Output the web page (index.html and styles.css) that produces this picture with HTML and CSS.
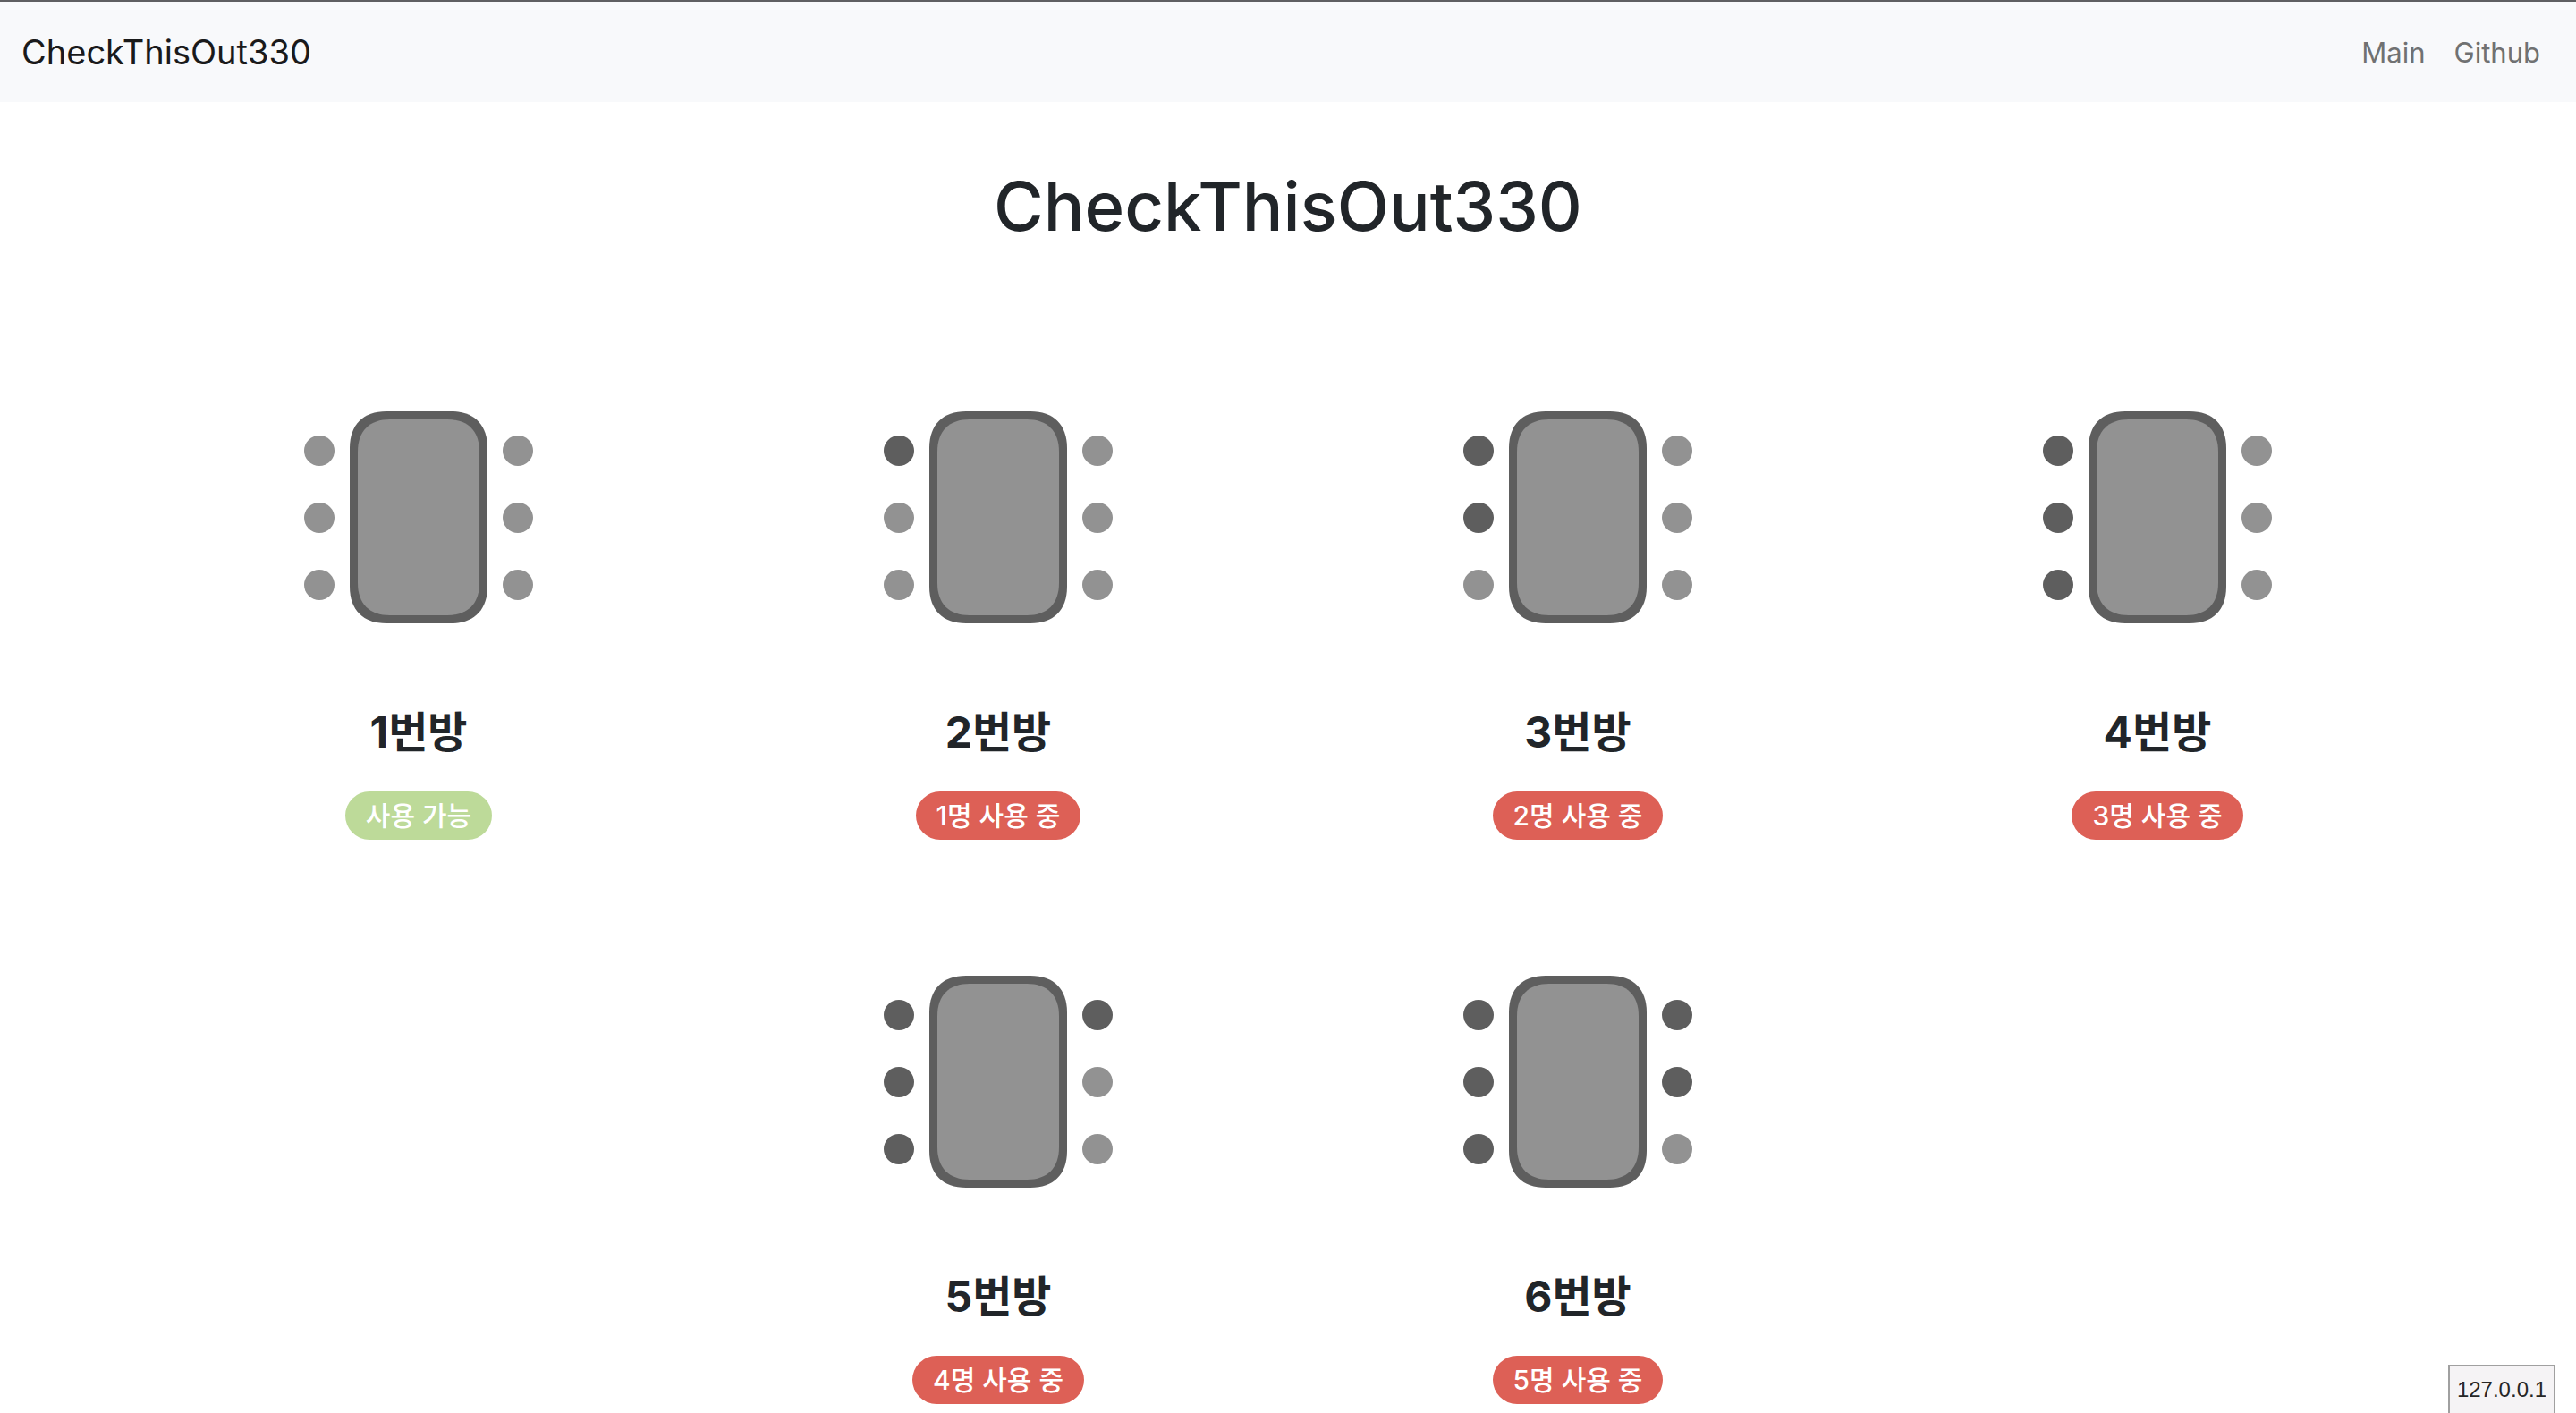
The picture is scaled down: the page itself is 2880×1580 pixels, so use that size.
FILE: index.html
```html
<!DOCTYPE html>
<html lang="ko">
<head>
<meta charset="utf-8">
<meta name="viewport" content="width=device-width, initial-scale=1">
<title>CheckThisOut330</title>
<link rel="stylesheet" href="styles.css">
</head>
<body>
<svg class="sprite" aria-hidden="true">
  <symbol id="table" viewBox="0 0 154 237">
    <path class="table-edge" d="M0 41C0 15 15 0 41 0H113C139 0 154 15 154 41V196C154 222 139 237 113 237H41C15 237 0 222 0 196Z"/>
    <path class="table-top" d="M9 45C9 22 22 9 45 9H109C132 9 145 22 145 45V192C145 215 132 228 109 228H45C22 228 9 215 9 192Z"/>
  </symbol>
</svg>
<header class="navbar">
  <a class="brand" href="#">CheckThisOut330</a>
  <nav class="nav-links">
    <a href="#">Main</a>
    <a href="#">Github</a>
  </nav>
</header>
<main class="container">
  <h1 class="title">CheckThisOut330</h1>
  <div class="rooms">
    <section class="room">
      <div class="seating">
        <div class="seats"><i class="seat"></i><i class="seat"></i><i class="seat"></i></div>
        <svg class="table"><use href="#table"/></svg>
        <div class="seats"><i class="seat"></i><i class="seat"></i><i class="seat"></i></div>
      </div>
      <h2 class="room-name">1번방</h2>
      <span class="badge free">사용 가능</span>
    </section>
    <section class="room">
      <div class="seating">
        <div class="seats"><i class="seat taken"></i><i class="seat"></i><i class="seat"></i></div>
        <svg class="table"><use href="#table"/></svg>
        <div class="seats"><i class="seat"></i><i class="seat"></i><i class="seat"></i></div>
      </div>
      <h2 class="room-name">2번방</h2>
      <span class="badge">1명 사용 중</span>
    </section>
    <section class="room">
      <div class="seating">
        <div class="seats"><i class="seat taken"></i><i class="seat taken"></i><i class="seat"></i></div>
        <svg class="table"><use href="#table"/></svg>
        <div class="seats"><i class="seat"></i><i class="seat"></i><i class="seat"></i></div>
      </div>
      <h2 class="room-name">3번방</h2>
      <span class="badge">2명 사용 중</span>
    </section>
    <section class="room">
      <div class="seating">
        <div class="seats"><i class="seat taken"></i><i class="seat taken"></i><i class="seat taken"></i></div>
        <svg class="table"><use href="#table"/></svg>
        <div class="seats"><i class="seat"></i><i class="seat"></i><i class="seat"></i></div>
      </div>
      <h2 class="room-name">4번방</h2>
      <span class="badge">3명 사용 중</span>
    </section>
    <section class="room">
      <div class="seating">
        <div class="seats"><i class="seat taken"></i><i class="seat taken"></i><i class="seat taken"></i></div>
        <svg class="table"><use href="#table"/></svg>
        <div class="seats"><i class="seat taken"></i><i class="seat"></i><i class="seat"></i></div>
      </div>
      <h2 class="room-name">5번방</h2>
      <span class="badge">4명 사용 중</span>
    </section>
    <section class="room">
      <div class="seating">
        <div class="seats"><i class="seat taken"></i><i class="seat taken"></i><i class="seat taken"></i></div>
        <svg class="table"><use href="#table"/></svg>
        <div class="seats"><i class="seat taken"></i><i class="seat taken"></i><i class="seat"></i></div>
      </div>
      <h2 class="room-name">6번방</h2>
      <span class="badge">5명 사용 중</span>
    </section>
  </div>
</main>
<div class="host">127.0.0.1</div>
</body>
</html>
```
FILE: styles.css
```css
* { box-sizing: border-box; }

body {
  margin: 0;
  background: #fff;
  color: #212529;
  font-family: Inter, "Noto Sans CJK KR", sans-serif;
}

a { color: inherit; text-decoration: none; }

.sprite { display: none; }
.table-edge { fill: #5e5e5e; }
.table-top { fill: #929292; }

.navbar {
  display: flex;
  justify-content: space-between;
  align-items: center;
  height: 114px;
  padding: 0 40px 0 24px;
  border-top: 2px solid #5f5f62;
  background: #f8f9fb;
}
.brand { font-size: 38px; color: #1a1a1b; }
.nav-links {
  display: flex;
  gap: 32px;
  font-size: 31px;
  color: #707172;
}

.container {
  max-width: 2640px;
  margin: 0 auto;
  padding: 68px 24px 0;
}
.title {
  margin: 0;
  font-size: 76px;
  font-weight: 500;
  line-height: 96px;
  text-align: center;
}

.rooms {
  display: flex;
  flex-wrap: wrap;
  justify-content: center;
  row-gap: 152px;
  padding-top: 182px;
}
.room {
  flex: 0 0 25%;
  display: flex;
  flex-direction: column;
  align-items: center;
}
.seating { display: flex; align-items: center; gap: 17px; }
.seats { display: flex; flex-direction: column; gap: 41px; }
.seat {
  width: 34px;
  height: 34px;
  border-radius: 50%;
  background: #929292;
}
.seat.taken { background: #5e5e5e; }
.table { width: 154px; height: 237px; }

.room-name {
  margin: 90px 0 34px;
  font-size: 48px;
  font-weight: 700;
  line-height: 64px;
}
.badge {
  padding: 0 23px;
  border-radius: 27px;
  background: #dd6056;
  color: #fff;
  font-size: 30px;
  font-weight: 500;
  line-height: 54px;
}
.badge.free { background: #bdda99; }

.host {
  position: fixed;
  right: 23px;
  bottom: 0;
  padding: 0 8px;
  border: 2px solid #a0a0a0;
  border-bottom: 0;
  background: #f5f3f5;
  color: #262626;
  font-family: "Liberation Sans", Arial, sans-serif;
  font-size: 24px;
  line-height: 52px;
}
```
